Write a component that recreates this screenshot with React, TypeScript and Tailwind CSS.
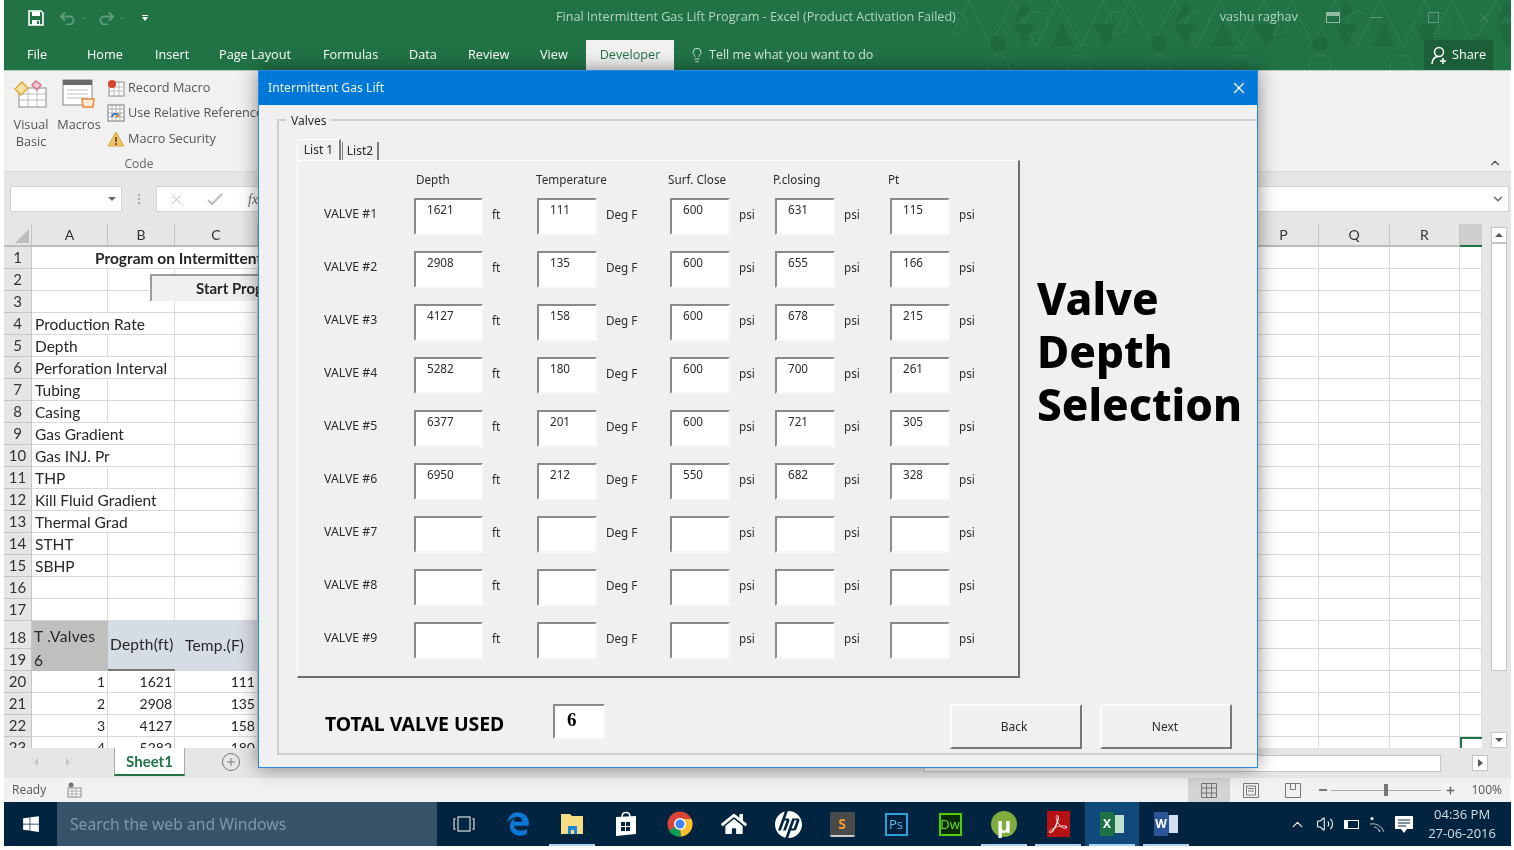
import React from "react";
import { FaEdgeLegacy, FaHome, FaWindows } from "react-icons/fa";
import { SiHp, SiAdobeacrobatreader } from "react-icons/si";
import { ChevronDown, ChevronUp, Lightbulb, Plus, Volume2, X } from "lucide-react";

// valve rows as shown on the form, blank ones have no values
const valves = [
  ["1621", "111", "600", "631", "115"],
  ["2908", "135", "600", "655", "166"],
  ["4127", "158", "600", "678", "215"],
  ["5282", "180", "600", "700", "261"],
  ["6377", "201", "600", "721", "305"],
  ["6950", "212", "550", "682", "328"],
  ["", "", "", "", ""],
  ["", "", "", "", ""],
  ["", "", "", "", ""],
];

const sheetLabels: Record<number, string> = {
  4: "Production Rate",
  5: "Depth",
  6: "Perforation Interval",
  7: "Tubing",
  8: "Casing",
  9: "Gas Gradient",
  10: "Gas INJ.  Pr",
  11: "THP",
  12: "Kill Fluid Gradient",
  13: "Thermal Grad",
  14: "STHT",
  15: "SBHP",
};

const numbers: Record<number, string[]> = {
  20: ["1", "1621", "111"],
  21: ["2", "2908", "135"],
  22: ["3", "4127", "158"],
  23: ["4", "5282", "180"],
};

const cell = "border-r border-b border-[#d9d9d9] bg-white";
const rowHead = "border-r border-b border-[#c4c4c4] bg-[#e6e6e6] flex items-center justify-center text-[15px] text-[#333]";

const RightCells = ({ selected }: { selected?: boolean }) => (
  <>
    <div className={cell} />
    <div className={cell} />
    <div className={cell} />
    <div className={selected ? "bg-white border-l-2 border-t-2 border-[#217346]" : cell} />
  </>
);

const QuickSave = () => (
  <svg width="16" height="16" viewBox="0 0 16 16" fill="none">
    <path d="M1 1h12l2 2v12H1z" stroke="#fff" strokeWidth="1.6" />
    <rect x="4" y="1.5" width="8" height="4.5" fill="#fff" />
    <rect x="4" y="10" width="8" height="5" fill="#fff" />
    <rect x="9" y="11" width="2" height="3" fill="#217346" />
  </svg>
);

const UndoIcon = ({ flip }: { flip?: boolean }) => (
  <svg width="16" height="14" viewBox="0 0 16 14" fill="none" className={flip ? "-scale-x-100" : ""}>
    <path d="M1.5 5.5h8a4 4 0 0 1 0 8H6M5 1.5l-4 4 4 4" stroke="#5d9b7b" strokeWidth="2" />
  </svg>
);

const HexPattern = () => (
  <svg className="absolute top-0 right-0" width="560" height="70" viewBox="0 0 560 70" fill="none">
    <defs>
      <pattern id="hexes" width="161" height="70" patternUnits="userSpaceOnUse">
        <g stroke="#2f7c54" strokeWidth="1" fill="none">
          <path d="M-5 46L18 0L40 46L62 0L85 46L107 0L130 46L152 0L175 46" />
          <circle cx="5" cy="23" r="11" />
          <circle cx="86" cy="23" r="11" />
          <circle cx="166" cy="23" r="11" />
          <circle cx="47" cy="66" r="11" />
          <circle cx="128" cy="66" r="11" />
        </g>
        <g fill="#1f6a3e">
          <circle cx="47" cy="44" r="8" />
          <path d="M142 24H161V38L153 46ZM62 24H84L73 46Z" />
          <path d="M0 24H3L0 30Z" />
          <path d="M100 46H122L111 22Z" />
          <path d="M62 24L72 2L80 10Z" />
        </g>
      </pattern>
    </defs>
    <rect width="560" height="70" fill="url(#hexes)" />
  </svg>
);

const ShareIcon = () => (
  <svg width="18" height="19" viewBox="0 0 18 19" fill="none" stroke="#fff" strokeWidth="1.5">
    <circle cx="8" cy="6" r="4.5" />
    <path d="M1 18c0-5 3-7.5 6-7.5M12 12v6M9 15h6" />
  </svg>
);

const TitleBar = () => (
  <div className="h-[40px] flex items-center text-[12.6px] text-[#b3d3c1] shrink-0 pb-[5px]">
    <div className="w-[552px] flex items-center pl-6 gap-4">
      <QuickSave />
      <div className="flex items-center gap-1">
        <UndoIcon />
        <ChevronDown size={8} className="text-[#5d9b7b]" />
      </div>
      <div className="flex items-center gap-1 ml-[-6px]">
        <UndoIcon flip />
        <ChevronDown size={8} className="text-[#5d9b7b]" />
      </div>
      <div className="flex flex-col items-center gap-[1px]">
        <div className="w-[6px] h-[1px] bg-white" />
        <div className="w-0 h-0 border-x-[3px] border-t-[4px] border-x-transparent border-t-white" />
      </div>
    </div>
    <span className="whitespace-nowrap relative">Final Intermittent Gas Lift Program - Excel (Product Activation Failed)</span>
    <span className="whitespace-nowrap ml-[264px] relative">vashu raghav</span>
    <div className="w-[14px] h-[11px] border border-[#8fbca3] ml-[28px] relative">
      <div className="w-full h-[3px] bg-[#8fbca3]" />
    </div>
    <div className="w-[12px] h-[1px] bg-[#5b9a79] ml-[30px] relative" />
    <div className="w-[11px] h-[11px] border border-[#5b9a79] ml-[46px] relative" />
    <X size={14} strokeWidth={1.2} className="text-[#5b9a79] ml-[38px] relative" />
  </div>
);

const TabStrip = () => (
  <div className="h-[30px] flex items-stretch text-[12.7px] text-white shrink-0 relative">
    <div className="flex items-center ml-[23px] w-[60px]">File</div>
    <div className="flex items-center w-[68px]">Home</div>
    <div className="flex items-center w-[64px]">Insert</div>
    <div className="flex items-center w-[104px]">Page Layout</div>
    <div className="flex items-center w-[86px]">Formulas</div>
    <div className="flex items-center w-[59px]">Data</div>
    <div className="flex items-center w-[72px]">Review</div>
    <div className="flex items-center w-[46px]">View</div>
    <div className="flex items-center justify-center w-[88px] bg-[#f1f1f1] text-[#217346]">Developer</div>
    <div className="flex items-center ml-[15px] gap-[4px] text-[12.5px] text-[#d7e8de]">
      <Lightbulb size={16} strokeWidth={1.4} />
      Tell me what you want to do
    </div>
    <div className="ml-auto mr-[18px] w-[69px] bg-[#1b5e38] flex items-center justify-center gap-[3px]">
      <ShareIcon />
      Share
    </div>
  </div>
);

const Ribbon = () => (
  <div className="h-[102px] bg-[#f1f1f1] border-t border-[#b9cfc3] border-b border-b-[#dcdcdc] flex text-[12.7px] text-[#555] relative shrink-0">
    <div className="flex flex-col w-[270px]">
      <div className="flex h-[80px]">
        <div className="w-[52px] ml-[1px] flex flex-col items-center pt-[8px]">
          <svg width="34" height="29" viewBox="0 0 34 29">
            <rect x="5" y="9" width="27" height="19" fill="#fff" stroke="#888" />
            <path d="M5 15h27M5 21h27M14 9v19M23 9v19" stroke="#bbb" />
            <path d="M1 10L8 3l6 6-7 7z" fill="#f7e3a8" stroke="#e0a93a" strokeWidth="1.5" />
            <path d="M18 6l4-4 5 4-4 5z" fill="#f7c9d3" stroke="#d5728c" strokeWidth="1.5" />
          </svg>
          <div className="leading-[17px] text-center mt-[8px]">Visual<br />Basic</div>
        </div>
        <div className="w-[44px] flex flex-col items-center pt-[8px]">
          <svg width="34" height="31" viewBox="0 0 34 31">
            <rect x="1" y="1" width="29" height="25" fill="#fff" stroke="#888" />
            <rect x="1" y="1" width="29" height="5" fill="#6b6b6b" />
            <path d="M5 11h21M5 15h21M5 19h21" stroke="#bbb" />
            <path d="M20 20h12l-1 8H21z" fill="#fbe9d2" stroke="#e8893a" strokeWidth="1.5" />
          </svg>
          <div className="leading-[17px] mt-[6px]">Macros</div>
        </div>
        <div className="flex flex-col ml-[6px] pt-[6px] gap-[4.5px]">
          <div className="flex items-center gap-[3px] h-[21px] whitespace-nowrap">
            <svg width="18" height="18" viewBox="0 0 18 18">
              <rect x="2" y="3" width="15" height="14" fill="#fff" stroke="#888" />
              <path d="M2 8h15M2 12h15M7 3v14M12 3v14" stroke="#bbb" />
              <circle cx="5" cy="5" r="4" fill="#d8452b" />
            </svg>
            Record Macro
          </div>
          <div className="flex items-center gap-[3px] h-[21px] whitespace-nowrap">
            <svg width="18" height="18" viewBox="0 0 18 18">
              <rect x="1" y="1" width="16" height="16" fill="#fff" stroke="#777" />
              <path d="M1 5h16M1 9h16M1 13h16M5 1v16M9 1v16M13 1v16" stroke="#aaa" />
              <path d="M5 13c0-4 6-4 7-1" stroke="#2f77c4" strokeWidth="1.6" fill="none" />
              <path d="M12 9v4H8" fill="#c83" />
            </svg>
            Use Relative References
          </div>
          <div className="flex items-center gap-[3px] h-[21px] whitespace-nowrap">
            <svg width="18" height="18" viewBox="0 0 18 18">
              <path d="M9 2l8 14H1z" fill="#f2c46d" stroke="#dca345" />
              <path d="M9 7v5M9 13v2" stroke="#5a3d10" strokeWidth="1.6" />
            </svg>
            Macro Security
          </div>
        </div>
      </div>
      <div className="text-center text-[12px] text-[#666] mt-[5px]">Code</div>
    </div>
    <ChevronUp size={14} className="absolute right-[9px] bottom-[1px] text-[#555]" />
  </div>
);

const FormulaBar = () => (
  <div className="h-[52px] bg-[#e6e6e6] flex items-center pl-[6px] pr-[2px] pt-[2px] shrink-0">
    <div className="w-[112px] h-[26px] bg-white border border-[#d4d4d4] flex items-center justify-end pr-[5px]">
      <div className="w-0 h-0 border-x-[4px] border-t-[4px] border-x-transparent border-t-[#666]" />
    </div>
    <div className="w-[34px] flex flex-col items-center gap-[2px]">
      <div className="w-[2px] h-[2px] bg-[#aaa]" />
      <div className="w-[2px] h-[2px] bg-[#aaa]" />
      <div className="w-[2px] h-[2px] bg-[#aaa]" />
    </div>
    <div className="flex-1 h-[26px] bg-white border border-[#d4d4d4] flex items-center pl-[12px] pr-[3px]">
      <X size={15} strokeWidth={1.5} className="text-[#bbb]" />
      <svg width="16" height="14" viewBox="0 0 16 14" className="ml-[23px]" fill="none">
        <path d="M1 8l4 4L15 2" stroke="#bbb" strokeWidth="2" />
      </svg>
      <span className="ml-[25px] italic font-['Liberation_Serif',serif] text-[14px] text-[#666]">fx</span>
      <ChevronDown size={14} className="ml-auto text-[#666]" strokeWidth={2.4} />
    </div>
  </div>
);

const Sheet = () => {
  const rows: React.ReactNode[] = [];
  for (let r = 1; r <= 23; r++) {
    if (r === 1) {
      rows.push(
        <React.Fragment key={r}>
          <div className={rowHead}>{r}</div>
          <div className={`${cell} col-span-4 pl-[63px] font-bold text-[15.5px] leading-[22px] whitespace-nowrap overflow-hidden`}>Program on Intermittent Gas Lift</div>
          <RightCells />
        </React.Fragment>
      );
    } else if (r === 18) {
      rows.push(
        <React.Fragment key={r}>
          <div className={`${rowHead} pt-[5px]`}>{r}</div>
          <div className="bg-[#bfbfbf] pl-[2px] pt-[4px] text-[15.5px] leading-[22px] tracking-[0.3px] whitespace-nowrap">T .Valves</div>
          <div className="row-span-2 bg-[#d6dce4] border-b-2 border-[#777] pl-[2px] flex items-center text-[15.5px] tracking-[0.2px] whitespace-nowrap">Depth(ft)</div>
          <div className="row-span-2 bg-[#d6dce4] pl-[10px] flex items-center text-[15.5px] tracking-[0.2px] whitespace-nowrap">Temp.(F)</div>
          <div className={cell} />
          <RightCells />
        </React.Fragment>
      );
    } else if (r === 19) {
      rows.push(
        <React.Fragment key={r}>
          <div className={rowHead}>{r}</div>
          <div className="bg-[#bfbfbf] pl-[2px] text-[15.5px] leading-[22px]">6</div>
          <div className={cell} />
          <RightCells />
        </React.Fragment>
      );
    } else {
      const nums = numbers[r];
      const label = sheetLabels[r];
      // long labels spill over into column B, like a real sheet does
      const spills = !!label && label.length > 8;
      rows.push(
        <React.Fragment key={r}>
          <div className={rowHead}>{r}</div>
          <div className={`${cell} ${spills ? "border-r-0 relative z-10" : ""} pl-[3px] pr-[2px] leading-[22px] whitespace-nowrap ${nums ? "text-right text-[14px]" : "text-[15.5px]"}`}>{nums ? nums[0] : label}</div>
          <div className={`${cell} pr-[2px] text-right text-[14px] leading-[22px]`}>{nums ? nums[1] : ""}</div>
          <div className={`${cell} pr-[2px] text-right text-[14px] leading-[22px]`}>{nums ? nums[2] : ""}</div>
          <div className={cell} />
          <RightCells selected={r === 23} />
        </React.Fragment>
      );
    }
  }
  const headers = ["A", "B", "C", "", "P", "Q", "R", ""];
  return (
    <div className="h-[524px] flex bg-[#e6e6e6] overflow-hidden shrink-0 relative font-['Lato',sans-serif] text-[#262626]">
      <div className="w-[1478px] grid grid-cols-[28px_76px_67px_83px_991px_70px_71px_70px_22px] grid-rows-[23px_repeat(17,22px)_28px_22px_repeat(4,22px)] shrink-0">
        <div className="bg-[#e6e6e6] flex items-end justify-end border-r border-[#c4c4c4] border-b-2 border-b-[#bbb]">
          <div className="w-0 h-0 border-b-[14px] border-l-[14px] border-l-transparent border-b-[#bdbdbd] mr-[2px] mb-[2px]" />
        </div>
        {headers.map((h, i) => (
          <div key={i} className={`${i === 7 ? "bg-[#cfcfcf] border-b-2 border-[#217346]" : "bg-[#e6e6e6] border-r border-b-2 border-[#c4c4c4] border-b-[#bbb]"} flex items-center justify-center text-[14px] text-[#333]`}>
            {h}
          </div>
        ))}
        {rows}
      </div>
      {/* start button sitting on the sheet */}
      <div className="absolute left-[146px] top-[50px] w-[300px] h-[27px] bg-[#efefef] border-t-2 border-l-2 border-[#9c9c9c] pl-[44px] font-bold text-[15px] leading-[24px]">Start Program</div>
      <div className="w-[25px] flex flex-col items-center pl-[8px] pt-[3px] pb-0">
        <div className="w-[16px] h-[16px] bg-white border border-[#c6c6c6] flex items-center justify-center">
          <div className="w-0 h-0 border-x-[4px] border-b-[4px] border-x-transparent border-b-[#555]" />
        </div>
        <div className="w-[16px] h-[428px] bg-white border border-[#c6c6c6]" />
        <div className="flex-1" />
        <div className="w-[16px] h-[16px] bg-white border border-[#c6c6c6] flex items-center justify-center">
          <div className="w-0 h-0 border-x-[4px] border-t-[4px] border-x-transparent border-t-[#555]" />
        </div>
      </div>
    </div>
  );
};

const SheetTabs = () => (
  <div className="h-[30px] bg-[#e6e6e6] flex items-start relative shrink-0 font-['Lato',sans-serif]">
    <div className="w-0 h-0 mt-[10px] ml-[30px] border-y-[4px] border-r-[4px] border-y-transparent border-r-[#c4c4c4]" />
    <div className="w-0 h-0 mt-[10px] ml-[28px] border-y-[4px] border-l-[4px] border-y-transparent border-l-[#c4c4c4]" />
    <div className="ml-[44px] w-[71px] h-[28px] bg-white border-x border-[#aaa] border-b-2 border-b-[#217346] text-[#217346] font-bold text-[15px] flex items-center justify-center">Sheet1</div>
    <div className="ml-[37px] mt-[5px] w-[18px] h-[18px] rounded-full border border-[#777] flex items-center justify-center">
      <Plus size={12} className="text-[#777]" />
    </div>
    <div className="absolute left-[920px] top-[7px] w-[517px] h-[17px] bg-white border border-[#c6c6c6]" />
    <div className="absolute left-[1468px] top-[7px] w-[16px] h-[16px] bg-white border border-[#c6c6c6] flex items-center justify-center">
      <div className="w-0 h-0 border-y-[4px] border-l-[5px] border-y-transparent border-l-[#555]" />
    </div>
  </div>
);

const StatusBar = () => (
  <div className="h-[24px] bg-[#f1f1f1] flex items-center text-[12px] text-[#555] shrink-0">
    <span className="ml-[8px]">Ready</span>
    <svg width="16" height="16" viewBox="0 0 16 16" className="ml-[21px]">
      <circle cx="4" cy="3" r="2.5" fill="#777" />
      <rect x="1" y="6" width="13" height="9" fill="#fff" stroke="#888" />
      <path d="M1 9h13M1 12h13M5 6v9M9 6v9" stroke="#aaa" />
    </svg>
    <div className="ml-auto h-full w-[42px] bg-[#d4d4d4] flex items-center justify-center mr-[-1px]">
      <svg width="16" height="15" viewBox="0 0 16 15" fill="none" stroke="#777">
        <path d="M.5.5h15v14H.5zM.5 5h15M.5 10h15M5.5.5v14M10.5.5v14" />
      </svg>
    </div>
    <svg width="16" height="15" viewBox="0 0 16 15" fill="none" stroke="#777" className="ml-[14px]">
      <path d="M.5.5h15v14H.5zM3.5 3h9v9h-9zM5 5.5h6M5 8h6" />
    </svg>
    <svg width="16" height="15" viewBox="0 0 16 15" fill="none" stroke="#777" className="ml-[26px]">
      <path d="M.5.5h15v14H.5zM5.5.5v6h5v-6" />
    </svg>
    <div className="w-[8px] h-[2px] bg-[#777] ml-[18px]" />
    <div className="relative w-[110px] h-[1px] bg-[#aaa] ml-[4px]">
      <div className="absolute left-[53px] top-[-6px] w-[4px] h-[12px] bg-[#777]" />
    </div>
    <Plus size={11} strokeWidth={3} className="text-[#666] ml-[4px]" />
    <span className="ml-[15px] mr-[9px]">100%</span>
  </div>
);

const TaskIcon = ({ children, running, active }: { children: React.ReactNode; running?: boolean; active?: boolean }) => (
  <div className={`w-[54px] h-full flex items-center justify-center relative ${active ? "bg-[#0f4a7a]" : ""}`}>
    {children}
    {running && <div className="absolute bottom-0 left-[4px] right-[4px] h-[2px] bg-[#a9d3f0]" />}
  </div>
);

const Taskbar = () => (
  <div className="h-[44px] bg-[#012440] flex items-center text-white shrink-0">
    <div className="w-[53px] flex justify-center">
      <FaWindows size={18} />
    </div>
    <div className="w-[380px] h-full bg-[#365369] flex items-center pl-[13px] pt-[2px] text-[15.7px] text-[#7f97a8] font-['Noto_Sans',sans-serif]">
      Search the web and Windows
    </div>
    <div className="flex h-full">
      <TaskIcon>
        <svg width="22" height="16" viewBox="0 0 22 16" fill="none" stroke="#ccc" strokeWidth="1.3" className="ml-0">
          <rect x="5" y="1" width="12" height="14" />
          <path d="M2.5 3H1v10h1.5M19.5 3H21v10h-1.5" />
        </svg>
      </TaskIcon>
      <TaskIcon>
        <FaEdgeLegacy size={24} className="text-[#0b78d7]" />
      </TaskIcon>
      <TaskIcon running>
        <svg width="24" height="22" viewBox="0 0 24 22">
          <path d="M1 1h9l2 2h11v18H1z" fill="#f8dd85" />
          <rect x="8" y="13" width="9" height="8" fill="#1e88d8" />
          <rect x="11" y="17" width="3" height="4" fill="#f8dd85" />
        </svg>
      </TaskIcon>
      <TaskIcon>
        <svg width="22" height="26" viewBox="0 0 22 26" fill="#fff">
          <path d="M7 6c0-6 8-6 8 0" fill="none" stroke="#fff" strokeWidth="1.5" />
          <path d="M1 6l20-1v18L1 25z" />
          <path d="M6 11h4v4H6zM11 11h4v4h-4zM6 16h4v4H6zM11 16h4v4h-4z" fill="#012440" />
        </svg>
      </TaskIcon>
      <TaskIcon>
        <svg width="26" height="26" viewBox="0 0 26 26">
          <circle cx="13" cy="13" r="12.5" fill="#db4437" />
          <path d="M13 13L2 19.5A12.5 12.5 0 0 0 14 25.5Z" fill="#0f9d58" />
          <path d="M13 13L14 25.5A12.5 12.5 0 0 0 24.5 8H13Z" fill="#fbc02d" />
          <circle cx="13" cy="13" r="6" fill="#fff" />
          <circle cx="13" cy="13" r="4.5" fill="#4285f4" />
        </svg>
      </TaskIcon>
      <TaskIcon>
        <FaHome size={26} />
      </TaskIcon>
      <TaskIcon>
        <SiHp size={27} />
      </TaskIcon>
      <TaskIcon>
        <div className="w-[25px] h-[25px] bg-[#4a4a4a] border-b-2 border-[#ccc] rounded-[2px] flex items-center justify-center text-[#f79a2e] text-[14px] font-bold">S</div>
      </TaskIcon>
      <TaskIcon>
        <div className="w-[23px] h-[23px] bg-[#04203c] border-2 border-[#2aa2d8] flex items-center justify-center text-[#53bdf0] text-[13px] leading-none">Ps</div>
      </TaskIcon>
      <TaskIcon>
        <div className="w-[23px] h-[23px] bg-[#072a07] border-2 border-[#4fcb0d] flex items-center justify-center text-[#6fe01a] text-[13px] leading-none">Dw</div>
      </TaskIcon>
      <TaskIcon running>
        <div className="w-[26px] h-[26px] rounded-full bg-[#7fae3f] flex items-center justify-center text-white text-[22px] font-bold leading-none">µ</div>
      </TaskIcon>
      <TaskIcon running>
        <div className="w-[23px] h-[26px] bg-[#b51313] flex items-center justify-center">
          <SiAdobeacrobatreader size={18} />
        </div>
      </TaskIcon>
      <TaskIcon running active>
        <div className="flex items-center">
          <div className="w-[14px] h-[24px] bg-[#1d7145] flex items-center justify-center text-[12px] font-bold">X</div>
          <div className="w-[10px] h-[18px] bg-[#bfe0cc] border-l border-[#1d7145]" />
        </div>
      </TaskIcon>
      <TaskIcon running>
        <div className="flex items-center">
          <div className="w-[14px] h-[24px] bg-[#2a5699] flex items-center justify-center text-[12px] font-bold">W</div>
          <div className="w-[10px] h-[18px] bg-[#d5e1f3] border-l border-[#2a5699]" />
        </div>
      </TaskIcon>
    </div>
    <div className="ml-auto flex items-center pr-[15px]">
      <ChevronUp size={17} strokeWidth={1.6} />
      <Volume2 size={18} strokeWidth={1.4} className="ml-[10px]" />
      <div className="w-[15px] h-[9px] border border-white ml-[10px]">
        <div className="w-[3px] h-full bg-white" />
      </div>
      <svg width="18" height="16" viewBox="0 0 18 16" fill="none" stroke="#bbb" className="ml-[10px]">
        <path d="M1 8a12 12 0 0 1 14 8M5 11a7 7 0 0 1 6 5M9 14a3 3 0 0 1 2 2" />
        <circle cx="3" cy="2.5" r="1.5" fill="#fff" stroke="none" />
      </svg>
      <svg width="18" height="18" viewBox="0 0 18 18" fill="#fff" className="ml-[8px]">
        <path d="M0 1h18v13H12l-3 4-3-4H0z" />
        <path d="M3 5h12M3 8h12M3 11h8" stroke="#012440" />
      </svg>
      <div className="text-[13px] leading-[19px] text-center ml-[15px] text-[#d7dfe5]">
        04:36 PM
        <br />
        27-06-2016
      </div>
    </div>
  </div>
);

const inputBox = "border-2 border-t-[#8a8a8a] border-l-[#8a8a8a] border-r-[#f8f8f8] border-b-[#f8f8f8] bg-white";

const ValveRow = ({ n, v }: { n: number; v: string[] }) => {
  const units = ["ft", "Deg F", "psi", "psi", "psi"];
  const cols = [
    "w-[123px]",
    "w-[133px]",
    "w-[105px]",
    "w-[115px]",
    "w-[110px]",
  ];
  const boxes = ["w-[69px]", "w-[60px]", "w-[60px]", "w-[60px]", "w-[60px]"];
  return (
    <div className="flex h-[53px] items-start">
      <div className="w-[90px] h-[33px] flex items-center text-[12.3px]">VALVE #{n}</div>
      {v.map((val, i) => (
        <div key={i} className={`${cols[i]} flex items-start`}>
          <div className={`${boxes[i]} h-[37px] ${inputBox} pl-[11px] pt-[1px] text-[11.7px] leading-[16px]`}>{val}</div>
          <div className="ml-[9px] h-[33px] flex items-center text-[11.7px]">{units[i]}</div>
        </div>
      ))}
    </div>
  );
};

const Dialog = () => (
  <div className="absolute left-[258px] top-[70px] w-[1000px] h-[698px] bg-[#f0f0f0] border border-[#2b8ae0] shadow-[0_0_18px_rgba(0,0,0,0.45)] flex flex-col font-['Noto_Sans',sans-serif] text-[#2b2b2b]">
    <div className="h-[34px] bg-[#0078d7] flex items-center pl-[9px] pr-[9px] text-[12.2px] text-[#e8f3fb] shrink-0">
      Intermittent Gas Lift
      <X size={18} strokeWidth={1.6} className="ml-auto text-white" />
    </div>
    <div className="flex-1 pl-[18px] pt-[14px] pb-[12px]">
      <div className="relative h-full border-t-2 border-l-2 border-b-2 border-[#cfcfcf] pl-[18px] pt-[17px]">
        <span className="absolute left-[7px] top-[-8px] bg-[#f0f0f0] px-[5px] text-[12px] leading-[15px]">Valves</span>
        <div className="flex h-[22px] items-end text-[12px]">
          <div className="h-[21px] w-[44px] flex items-center justify-center border-r-2 border-[#7f7f7f] border-t border-t-white border-l border-l-white">List 1</div>
          <div className="h-[18px] w-[37px] flex items-center justify-center border-r-2 border-[#7f7f7f] border-l border-l-[#7f7f7f] ml-[1px]">List2</div>
        </div>
        <div className="flex">
          <div className="w-[723px] h-[518px] border-t border-t-white border-l border-l-white border-r-2 border-b-2 border-[#6f6f6f] pl-[26px] pt-[9px] shrink-0">
            <div className="flex h-[19px] text-[11.7px] items-center">
              <div className="ml-[92px] w-[120px]">Depth</div>
              <div className="w-[132px]">Temperature</div>
              <div className="w-[105px]">Surf. Close</div>
              <div className="w-[115px]">P.closing</div>
              <div>Pt</div>
            </div>
            <div className="mt-[9px]">
              {valves.map((v, i) => (
                <ValveRow key={i} n={i + 1} v={v} />
              ))}
            </div>
          </div>
          <div className="ml-[17px] mt-[112px] text-[44px] leading-[53px] font-extrabold text-black font-['Noto_Sans',sans-serif] whitespace-nowrap">
            Valve
            <br />
            Depth
            <br />
            Selection
          </div>
        </div>
        <div className="flex items-start mt-[26px]">
          <div className="ml-[28px] mt-[7px] w-[228px] text-[19.4px] leading-[25px] font-bold text-black whitespace-nowrap">TOTAL VALVE USED</div>
          <div className={`w-[52px] h-[35px] ${inputBox} pl-[12px] text-[19px] leading-[28px] font-bold text-black font-['Liberation_Serif',serif]`}>6</div>
          <div className="ml-[345px] w-[132px] h-[45px] bg-[#f0f0f0] border-2 border-t-[#fafafa] border-l-[#fafafa] border-r-[#777] border-b-[#777] flex items-center justify-center pr-[4px] text-[12px]">Back</div>
          <div className="ml-[18px] w-[132px] h-[45px] bg-[#f0f0f0] border-2 border-t-[#fafafa] border-l-[#fafafa] border-r-[#777] border-b-[#777] flex items-center justify-center pr-[2px] text-[12px]">Next</div>
        </div>
      </div>
    </div>
  </div>
);

export default function App() {
  return (
    <div className="relative w-[1514px] h-[850px] bg-white overflow-hidden pl-1 pr-[3px] pb-1 flex flex-col font-['Open_Sans',sans-serif] blur-[0.4px]">
      <div className="relative flex flex-col bg-[#217346] shrink-0">
        <HexPattern />
        <TitleBar />
        <TabStrip />
      </div>
      <Ribbon />
      <FormulaBar />
      <Sheet />
      <SheetTabs />
      <StatusBar />
      <Taskbar />
      <Dialog />
    </div>
  );
}
